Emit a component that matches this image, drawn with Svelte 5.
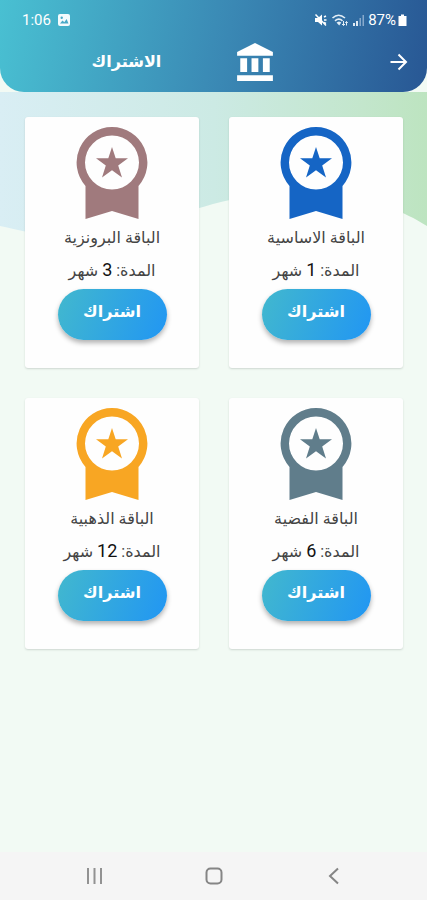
<script lang="ts">
	type Plan = {
		id: string;
		name: string;
		months: number;
		tone: 'blue' | 'bronze' | 'silver' | 'gold';
	};

	const plans: Plan[] = [
		{ id: 'basic', name: 'الباقة الاساسية', months: 1, tone: 'blue' },
		{ id: 'bronze', name: 'الباقة البرونزية', months: 3, tone: 'bronze' },
		{ id: 'silver', name: 'الباقة الفضية', months: 6, tone: 'silver' },
		{ id: 'gold', name: 'الباقة الذهبية', months: 12, tone: 'gold' }
	];
</script>

<div class="screen">
	<header class="top">
		<div class="status">
			<div class="status-group">
				<span>1:06</span>
				<svg width="14" height="14" viewBox="0 0 14 14" aria-hidden="true">
					<rect x="1" y="1" width="12" height="12" rx="2" fill="#f4fbfd" />
					<path d="M3 10.5 5.5 7.5 7.3 9.3 9.6 6 11.5 10.5Z" fill="#4aaac8" />
					<circle cx="4.7" cy="4.7" r="1.2" fill="#4aaac8" />
				</svg>
			</div>
			<div class="status-group tight">
				<svg width="14" height="14" viewBox="0 0 14 14" aria-hidden="true">
					<path d="M1 5h3l4-3.5v11L4 9H1Z" fill="#fff" />
					<path d="M1.5 1.5 12 12.5M10 4l2-1M10 7h2.5M10 9.5l2 1" stroke="#fff" stroke-width="1.5" />
				</svg>
				<svg width="20" height="14" viewBox="0 0 20 14" fill="none" stroke="#e3eef6" stroke-width="1.6" aria-hidden="true">
					<path d="M2.5 5Q8.500-.5 15 5M5 7.800Q8.800 4.400 12.500 7.800" />
					<path d="M6.500 9.500 9 8.500 11.300 9.500 9.200 12.500Z" fill="#e3eef6" stroke="none" />
					<path d="M13.500 8v4.500M12 11l1.500 1.500L15 11M16.500 12.500V8.500M15.200 9.800l1.300-1.300 1.300 1.300" stroke-width="1" />
				</svg>
				<svg width="14" height="14" viewBox="0 0 14 14" aria-hidden="true">
					<path d="M1 10h2v3H1ZM4 8h2v5H4Z" fill="#dfeaf4" />
					<path d="M7.500 5h1.500v8H7.500ZM10.500 2H12v11h-1.500Z" fill="#87a9cc" />
				</svg>
				<span>87%</span>
				<svg width="9" height="14" viewBox="0 0 9 14" aria-hidden="true">
					<path d="M3 1.500h3V3H8.500V13H.5V3H3Z" fill="#fff" />
				</svg>
			</div>
		</div>

		<div class="bar">
			<h1 dir="rtl">الاشتراك</h1>
			<svg class="bank" width="40" height="40" viewBox="0 0 38 38" fill="#fff" aria-hidden="true">
				<path d="M19 1 36 9.500V13H2V9.500Z" />
				<path d="M5 15.500h6.500v13H5ZM15.700 15.500h6.500v13h-6.500ZM26.500 15.500h6.500v13h-6.500Z" />
				<path d="M2 31.500h34V37H2Z" />
			</svg>
			<button class="back" type="button" aria-label="رجوع">
				<svg width="20" height="20" viewBox="0 0 20 20" fill="none" stroke="#fff" stroke-width="2" aria-hidden="true">
					<path d="M1.500 10h15.500M9.500 2.500 17 10 9.500 17.500" />
				</svg>
			</button>
		</div>
	</header>

	<main dir="rtl">
		<svg class="wave" viewBox="0 0 427 150" preserveAspectRatio="none" aria-hidden="true">
			<defs>
				<linearGradient id="sky" x1="0" y1="0" x2="1" y2="0">
					<stop offset="0" stop-color="#d9eef4" />
					<stop offset="0.500" stop-color="#cceae4" />
					<stop offset="0.850" stop-color="#c3e6cc" />
					<stop offset="1" stop-color="#bde4c0" />
				</linearGradient>
			</defs>
			<path d="M0 0H427V134C414 126 404 121 390 116C330 92 260 99 213 112C165 126 110 143 60 143C34 143 16 137 0 134Z" fill="url(#sky)" />
		</svg>

		<div class="plans">
			{#each plans as plan (plan.id)}
				<article class="card">
					<svg class="badge {plan.tone}" width="72" height="92" viewBox="0 0 72 92" aria-hidden="true">
						<path
							fill-rule="evenodd"
							d="M36 0A35.500 35.500 0 0 1 62.500 59V92L36 84 9.500 92V59A35.500 35.500 0 0 1 36 0ZM36 8.500A27 27 0 1 0 36 62.500A27 27 0 1 0 36 8.500Z"
						/>
						<path d="M36 20 39.700 31.300 52 31.300 42.200 38.500 46 50.500 36 43.300 26 50.500 29.800 38.500 20 31.300 32.300 31.300Z" />
					</svg>
					<h2>{plan.name}</h2>
					<p>المدة: <span>{plan.months}</span> شهر</p>
					<button class="subscribe" type="button">اشتراك</button>
				</article>
			{/each}
		</div>
	</main>

	<nav class="system">
		<button type="button" aria-label="التطبيقات الأخيرة">
			<svg width="20" height="20" viewBox="0 0 20 20" fill="none" stroke="#929292" stroke-width="2" aria-hidden="true">
				<path d="M3 2v16M9.500 2v16M16 2v16" />
			</svg>
		</button>
		<button type="button" aria-label="الرئيسية">
			<svg width="20" height="20" viewBox="0 0 20 20" fill="none" stroke="#858585" stroke-width="2" aria-hidden="true">
				<rect x="2.500" y="2.500" width="15" height="15" rx="4" />
			</svg>
		</button>
		<button type="button" aria-label="السابق">
			<svg width="20" height="20" viewBox="0 0 20 20" fill="none" stroke="#858585" stroke-width="2" aria-hidden="true">
				<path d="M16 2.500 8 10l8 7.500" />
			</svg>
		</button>
	</nav>
</div>

<style>
	:global(body) {
		margin: 0;
		background: #f2faf4;
	}

	.screen {
		display: flex;
		flex-direction: column;
		min-height: 100vh;
		background: #f2faf4;
		font-family: Roboto, 'DejaVu Sans', sans-serif;
	}

	button {
		border: 0;
		padding: 0;
		font-family: inherit;
		cursor: pointer;
	}

	svg {
		display: block;
	}

	.top {
		padding-bottom: 8px;
		border-radius: 0 0 24px 24px;
		background: linear-gradient(100deg, #49c0d2 0%, #3a88b4 53%, #285794 100%);
		color: #fff;
	}

	.status {
		display: flex;
		align-items: center;
		justify-content: space-between;
		height: 40px;
		padding: 0 20px 0 22px;
		font-size: 15px;
	}

	.status-group {
		display: flex;
		align-items: center;
		gap: 6px;
	}

	.tight {
		gap: 2px;
	}

	.bar {
		display: grid;
		grid-template-columns: 55% auto 1fr;
		align-items: center;
		height: 44px;
	}

	h1 {
		margin: 0;
		padding-left: 18px;
		font-size: 16px;
		line-height: 28px;
		text-align: center;
	}

	.back {
		justify-self: end;
		padding: 8px 18px;
		background: none;
	}

	main {
		position: relative;
		flex: 1;
	}

	.wave {
		position: absolute;
		top: 0;
		left: 0;
		width: 100%;
		height: 150px;
	}

	.plans {
		position: relative;
		display: grid;
		grid-template-columns: 1fr 1fr;
		gap: 30px;
		padding: 25px 24px 25px 25px;
	}

	.card {
		display: flex;
		flex-direction: column;
		align-items: center;
		padding: 10px 8px 28px;
		border-radius: 3px;
		background: #fefefe;
		box-shadow: 0 1px 2px rgba(60, 80, 70, 0.2);
		color: #444;
	}

	.badge.blue { fill: #1565c5; }
	.badge.bronze { fill: #a07a7d; }
	.badge.silver { fill: #607d8b; }
	.badge.gold { fill: #f8a623; }

	h2,
	p {
		margin: 0;
		font-size: 16px;
		font-weight: 400;
		line-height: 32px;
	}

	h2 {
		margin-top: 3px;
	}

	p span {
		color: #111;
		font-size: 18px;
	}

	.subscribe {
		width: 109px;
		height: 51px;
		margin-top: 2px;
		padding-bottom: 6px;
		border-radius: 26px;
		background: linear-gradient(110deg, #42b8ce, #2196f3);
		box-shadow: 0 3px 5px rgba(0, 0, 0, 0.3);
		color: #fff;
		font-size: 16px;
		font-weight: 700;
	}

	.system {
		display: flex;
		align-items: center;
		justify-content: space-between;
		height: 48px;
		padding: 0 20%;
		background: #f5f5f5;
	}

	.system button {
		background: none;
	}
</style>
